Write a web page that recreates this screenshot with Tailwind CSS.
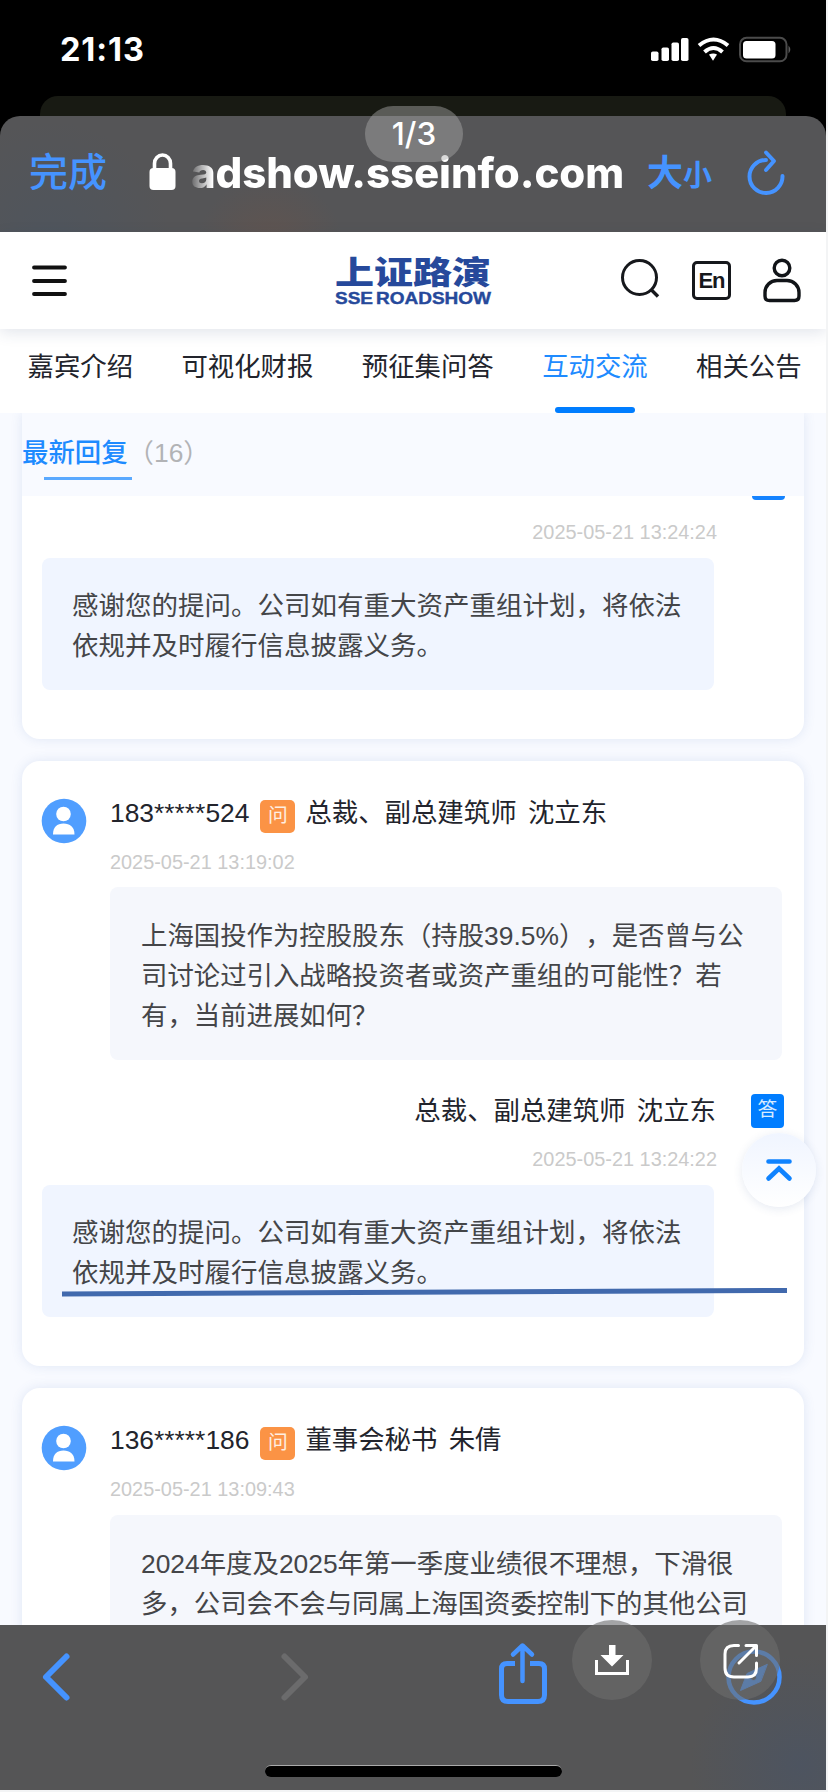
<!DOCTYPE html>
<html lang="zh-CN">
<head>
    <meta charset="UTF-8">
    <meta name="viewport" content="width=device-width, initial-scale=1.0">
    <title>上证路演</title>
    <script src="https://cdn.jsdelivr.net/npm/@tailwindcss/browser@4"></script>
</head>
<body class="bg-[#f3f4f5] font-['Liberation_Sans','Noto_Sans_CJK_SC',sans-serif] [text-spacing-trim:space-all]">
<div class="relative w-[828px] h-[1792px] overflow-hidden">
<div class="w-[826px] h-[1790px] flex flex-col overflow-hidden">

    <!-- Status bar -->
    <div class="bg-black h-[96px] shrink-0 flex items-center justify-between pl-[60px] pr-[34px] pt-1">
        <span class="text-white text-[32.5px] font-bold font-['Inter',sans-serif] tracking-[0.9px]">21:13</span>
        <svg class="w-[144px] h-[28px]" viewBox="0 0 144 28" fill="none">
            <g fill="#fff">
                <rect x="3" y="15.500" width="7.500" height="9.500" rx="1.800"/>
                <rect x="13.500" y="11.500" width="7.500" height="13.500" rx="1.800"/>
                <rect x="23.500" y="6.500" width="7.500" height="18.500" rx="1.800"/>
                <rect x="33" y="2" width="7.500" height="23" rx="1.800"/>
                <path d="M61 18.500q4.500 -2 8 0l-4 6.300z"/>
            </g>
            <g stroke="#fff" stroke-width="4">
                <path d="M51 9.500Q65.500 -2.500 80 9.500"/>
                <path d="M56.500 16Q65.500 8 74.500 16"/>
            </g>
            <rect x="92" y="1.800" width="46.500" height="23.500" rx="6.500" stroke="#4b4b4b" stroke-width="2"/>
            <rect x="95" y="5" width="32.500" height="17.500" rx="3.500" fill="#fff"/>
            <path d="M140.500 9.500q3.500 4 0 8z" fill="#5b5b5b"/>
        </svg>
    </div>

    <!-- Browser top bar -->
    <div class="bg-black shrink-0">
        <div class="mx-[40px] h-[20px] rounded-t-[18px] bg-[#181a13]"></div>
        <div class="h-[116px] rounded-t-[20px] bg-[#555557] bg-[radial-gradient(circle_at_270px_135px,#61544f_0,transparent_75px),radial-gradient(circle_at_50px_125px,#4f555d_0,transparent_120px)] flex items-center pl-[29px] text-[#4593ff]">
            <span class="text-[39px] leading-none font-medium w-[120px] -mt-[3px]">完成</span>
            <svg class="w-[27px] h-[38px] -mt-[4px]" viewBox="0 0 27 38">
                <path d="M5.500 17V10.500a8 8.500 0 0 1 16 0V17" fill="none" stroke="#fff" stroke-width="3.600"/>
                <rect x="0.500" y="15" width="26" height="22" rx="4" fill="#fff"/>
            </svg>
            <span class="ml-[15px] w-[434px] shrink-0 -mt-[3px] text-[42px] leading-[50px] font-extrabold font-['Inter',sans-serif] tracking-[-0.1px] whitespace-nowrap bg-linear-to-r from-white/10 via-white via-5% to-white bg-clip-text text-transparent">adshow.sseinfo.com</span>
            <span class="ml-[22px] flex items-baseline font-bold leading-none">
                <span class="text-[36px]">大</span><span class="text-[29px]">小</span>
            </span>
            <svg class="absolute left-[744px] top-[146px] w-[46px] h-[52px]" viewBox="0 0 46 52" fill="none" stroke="#4593ff" stroke-width="4" stroke-linecap="round" stroke-linejoin="round">
                <path d="M22 14a16.500 16.500 0 1 0 16.500 16"/>
                <path d="M22 6.500L30 15L22 24"/>
            </svg>
        </div>
    </div>

    <!-- Site header -->
    <header class="relative z-10 bg-white h-[97px] shrink-0 flex items-center pb-[2px] shadow-[0_4px_14px_rgba(40,60,110,0.13)]">
        <svg class="ml-[31px] w-[37px] h-[34px]" viewBox="0 0 37 34" stroke="#111" stroke-width="3.800" stroke-linecap="round">
            <path d="M3 4.500H34M3 18H34M3 31H34"/>
        </svg>
        <svg class="ml-[266px] w-[160px] h-[56px] overflow-visible" viewBox="0 0 160 56" fill="#26499b">
            <text x="1" y="31.500" font-size="32" font-weight="900" textLength="156" lengthAdjust="spacingAndGlyphs" font-family="Noto Sans CJK SC">上证路演</text>
            <text x="1" y="52" font-size="16.500" font-weight="bold" textLength="156" lengthAdjust="spacingAndGlyphs" font-family="Liberation Sans" stroke="#26499b" stroke-width="0.400" word-spacing="-2">SSE ROADSHOW</text>
        </svg>
        <svg class="ml-[126px] w-[42px] h-[42px]" viewBox="0 0 42 42" fill="none" stroke="#16181c" stroke-width="3">
            <circle cx="19.500" cy="18.500" r="17"/>
            <path d="M31 30.500L38 37.500" stroke-width="3.400"/>
        </svg>
        <div class="ml-[30px] w-[39px] h-[39px] mt-[2px] rounded-[5px] border-[3px] border-[#16181c] text-[#16181c] text-[22px] leading-[34px] font-bold text-center tracking-[-1px]">En</div>
        <svg class="ml-[32px] w-[38px] h-[46px]" viewBox="0 0 38 46" fill="none" stroke="#111418" stroke-width="3.400">
            <circle cx="19" cy="11" r="7.800"/>
            <path d="M14 23.500H24A12 12 0 0 1 36 35.500V39Q36 43.500 31.500 43.500H6.500Q2 43.500 2 39V35.500A12 12 0 0 1 14 23.500Z"/>
        </svg>
    </header>

    <!-- Tabs -->
    <nav class="bg-white h-[84px] shrink-0 flex gap-[48.4px] pl-[27.500px] pt-[18px] text-[26.4px] leading-[40px] text-[#22242c] whitespace-nowrap">
        <span>嘉宾介绍</span>
        <span>可视化财报</span>
        <span>预征集问答</span>
        <span class="flex flex-col items-center justify-between text-[#1e8bff]">互动交流<i class="block w-[80px] h-[6px] rounded-full bg-[#007dff]"></i></span>
        <span>相关公告</span>
    </nav>

    <!-- Q&A list -->
    <main class="bg-[#f8faff] h-[1212px] shrink-0 overflow-hidden px-[22px]">
        <section class="h-[326px] bg-white rounded-b-[18px] shadow-[0_0_12px_rgba(60,100,180,0.13)]">
            <div class="h-[83px] bg-[#f8faff] text-[26.4px] leading-[40px] pt-[20px]">
                <div class="flex text-[#1e8bff]"><span class="font-medium">最新回复</span><span class="text-[#b2b3b6]">（16）</span></div>
                <div class="ml-[22px] mt-[4px] w-[88px] h-[3px] bg-[#5aa9ff]"></div>
            </div>
            <div class="ml-[730px] w-[33px] h-[4px] bg-[#1583ff] rounded-b-[4px]"></div>
            <p class="mt-[22px] mr-[87px] text-right text-[19.9px] leading-[20px] text-[#cacaca]">2025-05-21 13:24:24</p>
            <div class="ml-[20px] mt-[16px] w-[672px] h-[132px] rounded-[8px] bg-[#f0f5ff] pl-[30px] pt-[28px] text-[26.5px] leading-[40px] text-[#444548] whitespace-nowrap">感谢您的提问。公司如有重大资产重组计划，将依法<br>依规并及时履行信息披露义务。</div>
        </section>

        <section class="mt-[22px] h-[605px] bg-white rounded-[18px] shadow-[0_0_12px_rgba(60,100,180,0.13)] pt-[32px]">
            <div class="flex">
                <svg class="ml-[19px] mt-[5px] w-[46px] h-[46px]" viewBox="0 0 46 46">
                    <circle cx="23" cy="23" r="22.300" fill="#509eff"/>
                    <circle cx="22.500" cy="16" r="7.300" fill="#fff"/>
                    <path d="M12 36.500C12 29 16 25.500 22.500 25.500S33.500 29 33.500 36.500Z" fill="#fff"/>
                </svg>
                <div class="ml-[23px]">
                    <div class="flex text-[26.4px] leading-[40px] text-[#22242c] whitespace-nowrap">
                        <span>183*****524</span>
                        <span class="ml-[11px] mt-[7px] w-[35px] h-[33px] rounded-[5px] bg-[#fb9345] text-white/85 text-[19.8px] leading-[30px] text-center">问</span>
                        <span class="ml-[10px] [word-spacing:4px]">总裁、副总建筑师 沈立东</span>
                    </div>
                    <p class="mt-[19px] text-[19.9px] leading-[20px] text-[#cacaca]">2025-05-21 13:19:02</p>
                    <div class="mt-[15px] w-[672px] h-[173px] rounded-[8px] bg-[#f5f7fc] pl-[31px] pt-[29px] text-[26.4px] leading-[40px] text-[#444548] whitespace-nowrap">上海国投作为控股股东（持股39.5%），是否曾与公<br>司讨论过引入战略投资者或资产重组的可能性？若<br>有，当前进展如何？</div>
                </div>
            </div>
            <div class="mt-[31px] flex justify-end text-[26.4px] leading-[40px] text-[#22242c] [word-spacing:4px]">
                <span>总裁、副总建筑师 沈立东</span>
                <span class="ml-[35px] mr-[20px] mt-[3px] w-[33px] h-[34px] rounded-[4px] bg-[#007dff] text-white/85 text-[19.8px] leading-[31px] text-center">答</span>
            </div>
            <p class="mt-[18px] mr-[87px] text-right text-[19.9px] leading-[20px] text-[#cacaca]">2025-05-21 13:24:22</p>
            <div class="ml-[20px] mt-[16px] w-[672px] h-[132px] rounded-[8px] bg-[#f0f5ff] pl-[30px] pt-[28px] text-[26.5px] leading-[40px] text-[#444548] whitespace-nowrap">感谢您的提问。公司如有重大资产重组计划，将依法<br>依规并及时履行信息披露义务。</div>
        </section>

        <section class="mt-[22px] h-[605px] bg-white rounded-[18px] shadow-[0_0_12px_rgba(60,100,180,0.13)] pt-[32px]">
            <div class="flex">
                <svg class="ml-[19px] mt-[5px] w-[46px] h-[46px]" viewBox="0 0 46 46">
                    <circle cx="23" cy="23" r="22.300" fill="#509eff"/>
                    <circle cx="22.500" cy="16" r="7.300" fill="#fff"/>
                    <path d="M12 36.500C12 29 16 25.500 22.500 25.500S33.500 29 33.500 36.500Z" fill="#fff"/>
                </svg>
                <div class="ml-[23px]">
                    <div class="flex text-[26.4px] leading-[40px] text-[#22242c] whitespace-nowrap">
                        <span>136*****186</span>
                        <span class="ml-[11px] mt-[7px] w-[35px] h-[33px] rounded-[5px] bg-[#fb9345] text-white/85 text-[19.8px] leading-[30px] text-center">问</span>
                        <span class="ml-[10px] [word-spacing:4px]">董事会秘书 朱倩</span>
                    </div>
                    <p class="mt-[19px] text-[19.9px] leading-[20px] text-[#cacaca]">2025-05-21 13:09:43</p>
                    <div class="mt-[16px] w-[672px] h-[173px] rounded-[8px] bg-[#f5f7fc] pl-[31px] pt-[29px] text-[26.4px] leading-[40px] text-[#444548] whitespace-nowrap">2024年度及2025年第一季度业绩很不理想，下滑很<br>多，公司会不会与同属上海国资委控制下的其他公司</div>
                </div>
            </div>
        </section>
    </main>

    <!-- Browser toolbar -->
    <footer class="h-[165px] shrink-0 bg-[#555556] bg-[radial-gradient(circle_at_800px_140px,#4d5460_0,transparent_110px)] flex flex-col justify-between">
        <svg class="w-[826px] h-[120px]" viewBox="0 0 826 120" fill="none" stroke="#4593ff" stroke-linecap="round" stroke-linejoin="round">
            <path d="M66.500 31.500L46 52L66.500 72.500" stroke-width="6"/>
            <path d="M284.500 31.500L305 52L284.500 72.500" stroke="#6b6b6c" stroke-width="6"/>
            <path d="M515 38.500H507Q501.500 38.500 501.500 44V70Q501.500 76.500 508 76.500H538Q544.500 76.500 544.500 70V44Q544.500 38.500 539 38.500H530" stroke-width="5" stroke-linecap="butt"/>
            <path d="M522.500 56V22M513 29.500L522.500 20.500L532 29.500" stroke-width="4.500"/>
            <circle cx="754" cy="52" r="25.500" stroke-width="4.500"/>
            <path fill-rule="evenodd" d="M767 39.500L747 48.500L740.500 65.500L760.500 56.500ZM753.500 49.500a3 3 0 1 1 0 6a3 3 0 1 1 0 -6Z" fill="#4593ff" stroke-width="1"/>
        </svg>
        <div class="w-[297px] h-[12px] mx-auto mb-[13px] rounded-full bg-black border-t border-[#aaa]"></div>
    </footer>
</div>

    <!-- Pen stroke below the answer -->
    <svg class="absolute left-[62px] top-[1286px] w-[726px] h-[12px]" viewBox="0 0 726 12">
        <path d="M0 8L725 4.500" stroke="#4169ad" stroke-width="5"/>
    </svg>

    <!-- Back to top -->
    <div class="absolute left-[742px] top-[1133px] w-[74px] h-[74px] rounded-full bg-linear-to-b from-[#f0f5ff] to-white shadow-[0_2px_10px_rgba(50,80,150,0.12)]">
        <svg class="w-[74px] h-[74px]" viewBox="0 0 74 74" fill="none" stroke="#1083ff" stroke-width="4.600" stroke-linecap="round" stroke-linejoin="miter">
            <path d="M26.500 28.500H47.500M26.500 45.500L37 35.500L47.500 45.500"/>
        </svg>
    </div>

    <!-- Viewer controls -->
    <div class="absolute left-[365px] top-[106px] w-[98px] h-[56px] rounded-full bg-[#aaaaaa]/45 text-white text-[31.5px] leading-[56px] text-center font-medium font-['Inter',sans-serif]">1/3</div>
    <div class="absolute left-[572px] top-[1620px] w-[80px] h-[80px] rounded-full bg-[#6c6c6c]/60">
        <svg class="w-[80px] h-[80px]" viewBox="0 0 80 80">
            <path d="M37 25H43.500V35H51.500L40 46.500L28.500 35H37Z" fill="#fff"/>
            <path d="M24.500 40V53.500H55.500V40" fill="none" stroke="#fff" stroke-width="3"/>
        </svg>
    </div>
    <div class="absolute left-[700px] top-[1620px] w-[80px] h-[80px] rounded-full bg-[#6c6c6c]/60">
        <svg class="w-[80px] h-[80px]" viewBox="0 0 80 80" fill="none" stroke="#fff" stroke-width="3" stroke-linecap="round" stroke-linejoin="round">
            <path d="M38.500 25.500H34Q25 25.500 25 34V48Q25 57 34 57H48Q56.500 57 56.500 48V43"/>
            <path d="M46 25.500H56.500V35.500M56 26L39 43"/>
        </svg>
    </div>
</div>
</body>
</html>
